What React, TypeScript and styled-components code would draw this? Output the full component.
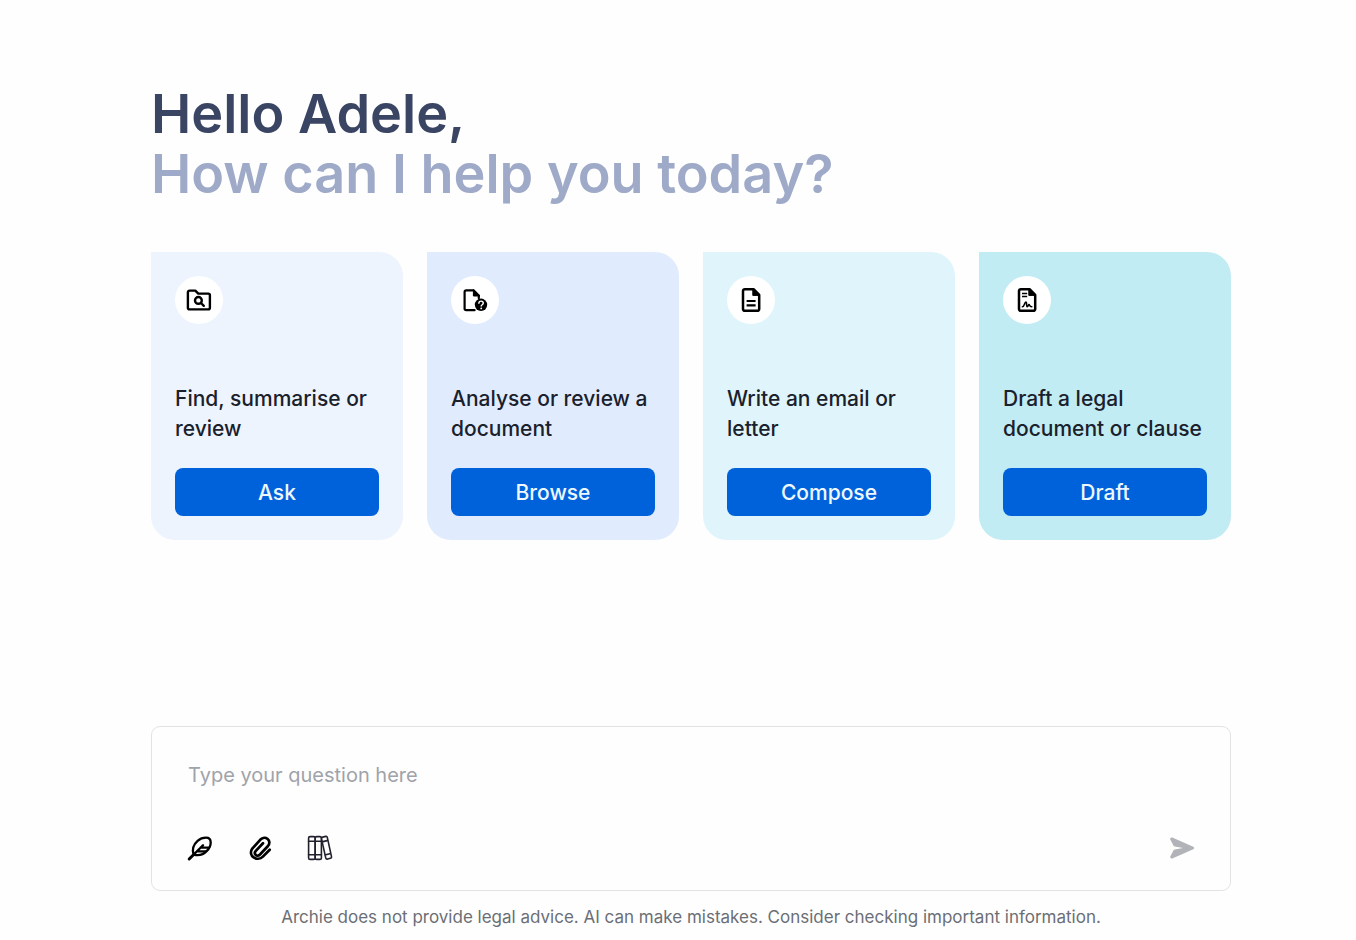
import React from "react";
import styled, { createGlobalStyle } from "styled-components";

const GlobalStyle = createGlobalStyle`
  *, *::before, *::after { box-sizing: border-box; }
  body {
    margin: 0;
    background: #fefefe;
    color: #1a202c;
    font-family: Inter, "Liberation Sans", sans-serif;
  }
  button, input { font: inherit; }
`;

const Page = styled.main`
  display: flex;
  flex-direction: column;
  min-height: 100vh;
  padding: 84px 125px 11px 151px;
`;

const Heading = styled.h1`
  margin: 0 0 48px;
  color: #3a4463;
  font-size: 54px;
  font-weight: 600;
  line-height: 60px;
`;

const Subheading = styled.span`
  display: block;
  color: #9faac9;
`;

const Cards = styled.section`
  display: grid;
  grid-template-columns: repeat(4, minmax(0, 1fr));
  gap: 24px;
  margin-bottom: 48px;
`;

const Card = styled.article<{ $tint: string }>`
  display: flex;
  flex-direction: column;
  padding: 24px;
  border-radius: 0 24px 24px 24px;
  background: ${({ $tint }) => $tint};
`;

const IconCircle = styled.div`
  display: grid;
  place-items: center;
  width: 48px;
  height: 48px;
  margin-bottom: 60px;
  border-radius: 50%;
  background: #fff;
`;

const CardTitle = styled.h2`
  flex: 1;
  margin: 0 0 24px;
  font-size: 21px;
  font-weight: 500;
  line-height: 30px;
`;

const CardButton = styled.button`
  height: 48px;
  padding: 0;
  border: 0;
  border-radius: 8px;
  background: #0062db;
  color: #eef8ff;
  font-size: 21px;
  font-weight: 500;
  cursor: pointer;
`;

const Composer = styled.form`
  display: flex;
  flex-direction: column;
  gap: 41px;
  margin-top: auto;
  padding: 32px 32px 26px 36px;
  border: 1px solid #e2e3e5;
  border-radius: 9px;
`;

const QuestionInput = styled.input`
  width: 100%;
  height: 32px;
  padding: 0;
  border: 0;
  outline: 0;
  background: transparent;
  font-size: 20px;

  &::placeholder {
    color: #a0a3a9;
    opacity: 1;
  }
`;

const Toolbar = styled.div`
  display: flex;
  align-items: center;
  gap: 28px;
`;

const ToolButton = styled.button<{ $end?: boolean }>`
  display: grid;
  place-items: center;
  width: 32px;
  height: 32px;
  margin-left: ${({ $end }) => ($end ? "auto" : "0")};
  padding: 0;
  border: 0;
  background: transparent;
  color: ${({ $end }) => ($end ? "#b1b3b9" : "#000")};
  cursor: pointer;
`;

const Tools = styled.div`
  display: flex;
  flex: 1;
  gap: 28px;
  margin-left: -4px;
`;

const Disclaimer = styled.p`
  margin: 14px 0 0;
  color: #6b6e75;
  font-size: 17px;
  line-height: 24px;
  text-align: center;
`;

const Icon = styled.svg`
  display: block;
  fill: none;
  stroke: currentColor;
  stroke-linecap: round;
  stroke-linejoin: round;
`;

const FolderSearch = () => (
  <Icon width="28" height="28" viewBox="0 0 28 28" strokeWidth="2.4" color="#000" aria-hidden="true">
    <path d="M4.5 4.6h5.800l3 3h10a1.6 1.6 0 0 1 1.6 1.6v12.6a1.6 1.6 0 0 1-1.6 1.6H4.500a1.6 1.6 0 0 1-1.6-1.6V6.200a1.6 1.6 0 0 1 1.6-1.6z" />
    <circle cx="13.400" cy="14.400" r="3.400" />
    <path d="m16 17 2.800 2.800" />
  </Icon>
);

const FileQuestion = () => (
  <Icon width="28" height="28" viewBox="0 0 28 28" strokeWidth="2.2" color="#000" aria-hidden="true">
    <path d="M13.6 24.2H5.2a1.6 1.6 0 0 1-1.6-1.6V6a1.6 1.6 0 0 1 1.6-1.6h7.4l5.2 5.2v2.6" />
    <path d="M12.4 4v6h6z" fill="currentColor" strokeWidth="1" />
    <circle cx="20" cy="18.8" r="6.2" fill="currentColor" stroke="none" />
    <path d="M17.900 17.300c0-2.900 4.400-2.800 4.400-.2 0 1.600-2.100 1.700-2.100 3" stroke="#fff" strokeWidth="1.4" />
    <circle cx="20.2" cy="22.4" r="0.9" fill="#fff" stroke="none" />
  </Icon>
);

const FileOutline = () => (
  <>
    <path d="M7.8 3.2h8.800l5.600 5.600v14.200a1.800 1.800 0 0 1-1.800 1.800H7.800A1.800 1.800 0 0 1 6 23V5a1.800 1.800 0 0 1 1.800-1.800z" />
    <path d="M15.800 3.200v6.200h6.600z" fill="currentColor" strokeWidth="1" />
  </>
);

const FileText = () => (
  <Icon width="28" height="28" viewBox="0 0 28 28" strokeWidth="2.500" color="#000" aria-hidden="true">
    <FileOutline />
    <path d="M9.600 15h9M9.600 19.400h9" strokeWidth="2.200" strokeLinecap="butt" />
  </Icon>
);

const FileSigned = () => (
  <Icon width="28" height="28" viewBox="0 0 28 28" strokeWidth="2.500" color="#000" aria-hidden="true">
    <FileOutline />
    <path d="M9 7.400h5.200M9 10.600h5.200" strokeWidth="1.500" strokeLinecap="butt" />
    <path d="M9.400 20.800c2.200 0 2-4.800 3.400-4.800s.2 4.600 1.400 4.600 1-2 1.800-2 .2 2.200 2.800 2.200" strokeWidth="1.600" />
  </Icon>
);

const Feather = () => (
  <Icon width="28" height="28" viewBox="0 0 28 28" strokeWidth="2.300" aria-hidden="true">
    <path d="m3.200 25 3.800-3.800" strokeWidth="3" />
    <path d="M7.600 20.600C5.800 14.800 8 10 11.600 6.800 14.600 4.200 17.400 3.700 20 3.700c3 0 4.700 1.700 4.700 4.800 0 3-1.200 5.800-3.800 8.400-3.200 3.400-7.800 5.200-13.300 3.700z" />
    <path d="M7.600 20.600 17 11.200M14.600 13.600h8.600M10.900 17.300h8.900" />
  </Icon>
);

const Paperclip = () => (
  <Icon width="28" height="28" viewBox="0 0 28 28" strokeWidth="2.700" aria-hidden="true">
    <path d="m23.700 15.700-6.800 6.900c-5.600 5.600-15.500-.6-10.600-8l7.900-8.800c5-5.300 12.200 1 7.800 6.200l-8 8.500c-3.400 3.400-6.700-1-4.200-3.700l7.200-7.600" />
  </Icon>
);

const Books = () => (
  <Icon width="28" height="28" viewBox="0 0 28 28" strokeWidth="1.600" color="#20212d" aria-hidden="true">
    <rect x="2.600" y="2.600" width="6.600" height="22.800" rx="1.500" />
    <rect x="9.200" y="2.600" width="6.200" height="22.800" rx="1.500" />
    <path d="M2.600 7.200h12.800M2.600 20.800h12.800" />
    <path d="m16.700 3.100 3-.7c.8-.2 1.400.2 1.600 1l4.200 19.200c.2.900-.2 1.500-1 1.700l-3 .8c-.9.200-1.500-.2-1.700-1L15.500 4.900c-.2-1 .3-1.600 1.200-1.800zM16.100 7.900l5.900-1.500M18.900 21l5.900-1.500" />
  </Icon>
);

const Send = () => (
  <Icon width="28" height="28" viewBox="0 0 28 28" aria-hidden="true">
    <path
      d="M4.300 3.600 25.200 12.700c1.300.6 1.300 2 0 2.600L4.300 24.400c-1.500.6-2.600-.7-1.900-2.100l3-5.700c.3-.6.8-.9 1.500-1l8.100-1.600-8.100-1.600c-.7-.1-1.200-.4-1.500-1l-3-5.700C1.700 4.300 2.800 3 4.300 3.600z"
      fill="currentColor"
      stroke="none"
    />
  </Icon>
);

const cards = [
  { title: "Find, summarise or review", action: "Ask", tint: "#edf4fd", icon: <FolderSearch /> },
  { title: "Analyse or review a document", action: "Browse", tint: "#e0ecfe", icon: <FileQuestion /> },
  { title: "Write an email or letter", action: "Compose", tint: "#dff5fb", icon: <FileText /> },
  { title: "Draft a legal document or clause", action: "Draft", tint: "#c1ecf3", icon: <FileSigned /> },
];

export default function App() {
  return (
    <>
      <GlobalStyle />
      <Page>
        <Heading>
          Hello Adele,
          <Subheading>How can I help you today?</Subheading>
        </Heading>
        <Cards>
          {cards.map((card) => (
            <Card key={card.action} $tint={card.tint}>
              <IconCircle>{card.icon}</IconCircle>
              <CardTitle>{card.title}</CardTitle>
              <CardButton type="button">{card.action}</CardButton>
            </Card>
          ))}
        </Cards>
        <Composer onSubmit={(event) => event.preventDefault()}>
          <QuestionInput aria-label="Your question" placeholder="Type your question here" />
          <Toolbar>
            <Tools>
              <ToolButton type="button" aria-label="Writing style"><Feather /></ToolButton>
              <ToolButton type="button" aria-label="Attach a file"><Paperclip /></ToolButton>
              <ToolButton type="button" aria-label="Library"><Books /></ToolButton>
            </Tools>
            <ToolButton $end type="submit" aria-label="Send"><Send /></ToolButton>
          </Toolbar>
        </Composer>
        <Disclaimer>
          Archie does not provide legal advice. AI can make mistakes. Consider checking important information.
        </Disclaimer>
      </Page>
    </>
  );
}
